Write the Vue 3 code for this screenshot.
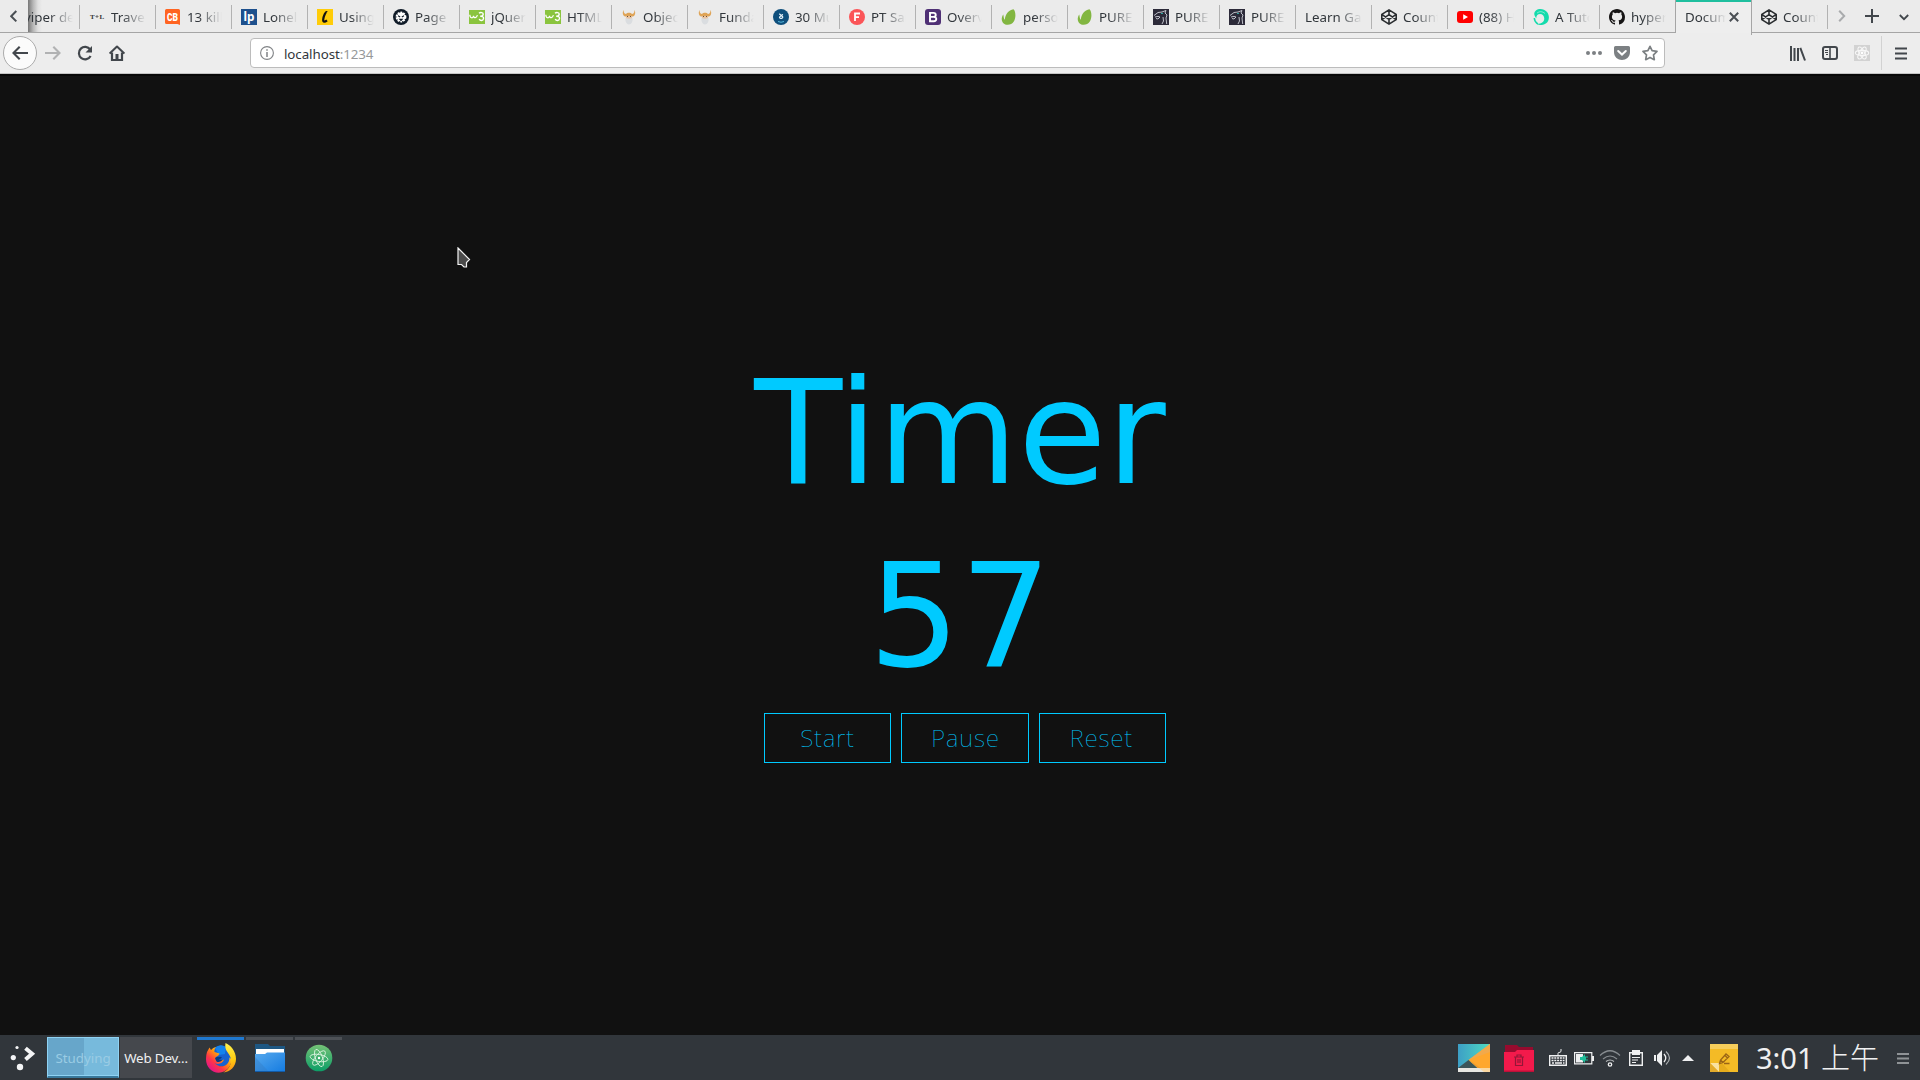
<script setup>
const tabs = [
  { icon: 'tl', title: 'Trave' },
  { icon: 'cb', title: '13 kill' },
  { icon: 'lp', title: 'Lonel' },
  { icon: 'l', title: 'Using' },
  { icon: 'lion', title: 'Page ' },
  { icon: 'w3', title: 'jQuer' },
  { icon: 'w3', title: 'HTML' },
  { icon: 'viking', title: 'Objec' },
  { icon: 'viking', title: 'Funda' },
  { icon: 'thirty', title: '30 Mu' },
  { icon: 'f', title: 'PT San' },
  { icon: 'b', title: 'Overv' },
  { icon: 'leaf', title: 'perso' },
  { icon: 'leaf', title: 'PURE' },
  { icon: 'panther', title: 'PURE' },
  { icon: 'panther', title: 'PURE' },
  { icon: '', title: 'Learn Ga' },
  { icon: 'codepen', title: 'Count' },
  { icon: 'yt', title: '(88) H' },
  { icon: 'tut', title: 'A Tuto' },
  { icon: 'github', title: 'hyper' },
  { icon: '', title: 'Docum', active: true },
  { icon: 'codepen', title: 'Count' },
]
</script>

<template>
  <div class="screen">
    <header class="tabbar">
      <div class="scroll-left">
        <svg width="8" height="14" viewBox="0 0 8 14"><path d="M6.300 1 1.200 6.200l5.100 5.200" fill="none" stroke="#4a4f54" stroke-width="2" /></svg>
      </div>
      <div class="tab partial"><span class="title">viper de</span></div>
      <div v-for="(t, i) in tabs" :key="i" class="tab" :class="{ active: t.active, before: i === 20 }">
        <svg v-if="t.icon" class="fav" width="16" height="16" viewBox="0 0 16 16">
          <g v-if="t.icon === 'tl'" font-family="Liberation Serif, serif" font-weight="700" font-size="7" fill="#333">
            <text x="1" y="10">T</text><text x="10.500" y="10">L</text><path d="M6.500 7.500h3M8 6v3" stroke="#777" stroke-width="1" />
          </g>
          <g v-else-if="t.icon === 'cb'">
            <path d="M1.500 0h12A1.500 1.500 0 0 1 15 1.500V16L12.500 15H1.500A1.500 1.500 0 0 1 0 13.500v-12A1.500 1.500 0 0 1 1.500 0" fill="#ff6421" />
            <text x="2" y="12" font-family="Roboto, sans-serif" font-weight="900" font-size="11.500" textLength="11" lengthAdjust="spacingAndGlyphs" fill="#fff">CB</text>
          </g>
          <g v-else-if="t.icon === 'lp'">
            <path d="M0 0h16v16H0z" fill="#1d508d" />
            <text x="2.500" y="11.500" font-family="Noto Sans, sans-serif" font-weight="700" font-size="12.500" textLength="11" lengthAdjust="spacingAndGlyphs" fill="#fff">lp</text>
          </g>
          <g v-else-if="t.icon === 'l'">
            <path d="M0 0h16v16H0z" fill="#ffcc08" />
            <path d="M10 3.200C8.700 2 6.500 7.500 6.200 10.500c-.2 3 1.800 2.500 3.800.8" fill="none" stroke="#111" stroke-width="2.200" />
          </g>
          <g v-else-if="t.icon === 'lion'">
            <circle cx="8" cy="8" r="8" fill="#101b28" />
            <circle cx="8" cy="8" r="4.400" fill="#fff" stroke="#fff" stroke-width="2" stroke-dasharray="1.800 1" />
            <path d="M5 6.800 7.200 8M11 6.800 8.800 8M6.800 10.200h2.400L8 11.500z" stroke="#101b28" stroke-width="1.100" />
          </g>
          <g v-else-if="t.icon === 'w3'">
            <path d="M0 1h16v14H0z" fill="#8ac43e" />
            <path d="M.8 5.800C1 9.600 4.200 9.600 4.500 6.800 4.900 9.600 7.600 9 8.400 6.200" fill="none" stroke="#fff" stroke-width="1.200" />
            <path d="M10 4.300c1.500-1.400 4.300-.8 4.200.9-.1 1.400-1.500 2-3 2 2.200-.1 3.600.8 3.300 2.500-.4 2.300-3.300 2.500-4.300.3" fill="none" stroke="#fff" stroke-width="1.400" />
          </g>
          <g v-else-if="t.icon === 'viking'">
            <path d="M2.500 1C2.500 4 4 5 5 5c1-1.600 5-1.600 6 0 1 0 2.500-1 2.500-4 1.500 3 .5 6-1.700 6.500H4.200C2 7 1 4 2.500 1" fill="#dfa457" />
            <path d="M5 7h6v4L8 13l-3-2z" fill="#e8c3a2" /><path d="M4.500 9 8 9.800 11.500 9c.5 3.500-1 6.500-3.500 6.500S4 12.500 4.500 9" fill="#dadde0" />
            <path d="M6 7.500h1M9 7.500h1" stroke="#69543f" />
          </g>
          <g v-else-if="t.icon === 'thirty'">
            <circle cx="8" cy="8" r="8" fill="#0f4f7c" />
            <path d="M6.300 4.800 9.700 7.800C10 9.800 7 10 6.500 8.300 6.400 7.300 9.300 7 9.600 5.200" fill="none" stroke="#e8f4fa" stroke-width="1.200" />
            <path d="M5 12.500q3 1.500 6 0" fill="none" stroke="#54b7dd" />
          </g>
          <g v-else-if="t.icon === 'f'">
            <circle cx="8" cy="8" r="8" fill="#fb5558" />
            <path d="M6 12V4.500h5M6 8.200h4" fill="none" stroke="#fff" stroke-width="1.800" />
          </g>
          <g v-else-if="t.icon === 'b'">
            <rect width="16" height="16" rx="3" fill="#4f3075" />
            <path d="M5 3.900h3.500c3 0 3 4 0 4H5h3.800c3.400 0 3.200 4.300 0 4.300H5z" fill="none" stroke="#fff" stroke-width="1.900" />
          </g>
          <g v-else-if="t.icon === 'leaf'">
            <path d="M12.500.3c2.400 2 2.600 9 .3 12.200-2.300 3.700-7.800 4.400-10.700 1.400C.2 12 .3 8 2.300 5.500c.5 2.500.4 4.500 1.500 5.200C4.200 5.500 7.500 1 12.500.3" fill="#82b641" />
          </g>
          <g v-else-if="t.icon === 'panther'">
            <path d="M0 0h16v16H0z" fill="#2c2a39" />
            <path d="M1 6.500 5 3.500 9 3l4-1.500L12 4l2 2-1 3 .7 6M2 8l3-.6 2 .6-2 2-2-.5M10 8l.5 4L9 15" fill="none" stroke="#ced0d8" stroke-width=".9" />
            <path d="M8 4.500h2" stroke="#2fa6a0" />
          </g>
          <g v-else-if="t.icon === 'codepen'" fill="none" stroke="#2a2d30" stroke-width="1.600" stroke-linejoin="round">
            <path d="M8 .9 15.200 5.400v5.200L8 15.100.8 10.600V5.400zM8 .9v4.700M8 10.400v4.700M.8 5.400 8 10.400l7.200-5M.8 10.600 8 5.600l7.200 5" />
          </g>
          <g v-else-if="t.icon === 'yt'">
            <rect y="2" width="16" height="12" rx="3" fill="#f00" /><path d="M6.200 5.200v5.600L11 8z" fill="#fff" />
          </g>
          <g v-else-if="t.icon === 'tut'">
            <path d="M3 1.500C6-.8 11-.3 14 3c3 4 2.300 9-1.200 11.500-3 2.200-7.500 2-9.500-.2 3 1 6.700-.2 7.700-3 1-3.300-1-6.300-4-6.300-2.500 0-4 2-3.600 4.200C1 7 .3 3.500 3 1.500" fill="#14dbac" />
            <path d="M1.300 9Q1.500 13 4.800 15" fill="none" stroke="#14dbac" stroke-width="1.500" />
            <path d="M4 4q4-3 8 .5" fill="none" stroke="#a5f3df" stroke-width=".7" />
          </g>
          <path v-else-if="t.icon === 'github'" fill="#171515" d="M8 0C3.580 0 0 3.580 0 8c0 3.540 2.290 6.530 5.470 7.590.4.070.55-.17.55-.38 0-.19-.01-.82-.01-1.490-2.010.37-2.530-.49-2.690-.94-.09-.23-.48-.94-.82-1.130-.28-.15-.68-.52-.01-.53.630-.01 1.080.58 1.230.82.72 1.210 1.870.87 2.330.66.070-.52.280-.87.510-1.070-1.780-.2-3.640-.89-3.640-3.950 0-.87.310-1.590.82-2.150-.08-.2-.36-1.020.08-2.120 0 0 .67-.21 2.200.82a7.400 7.400 0 0 1 4 0c1.530-1.040 2.200-.82 2.200-.82.44 1.100.16 1.920.08 2.120.510.560.82 1.270.82 2.150 0 3.070-1.870 3.750-3.650 3.950.29.25.54.73.54 1.480 0 1.070-.01 1.930-.01 2.200 0 .21.150.460.550.38A8 8 0 0 0 16 8c0-4.420-3.580-8-8-8" />
        </svg>
        <span class="title">{{ t.title }}</span>
        <svg v-if="t.active" class="close" width="10" height="10" viewBox="0 0 10 10"><path d="m.8.8 8.400 8.400M9.200.8.8 9.200" stroke="#4a4f54" stroke-width="2" /></svg>
      </div>
      <div class="tab-tools">
        <svg width="8" height="12" viewBox="0 0 8 12"><path d="m1.200.8 5 5.200-5 5.200" fill="none" stroke="#a9abad" stroke-width="2" /></svg>
        <svg class="plus" width="14" height="14" viewBox="0 0 14 14"><path d="M7 0v14M0 7h14" stroke="#42474c" stroke-width="2" /></svg>
        <svg class="down" width="10" height="7" viewBox="0 0 10 7"><path d="m.8 1 4.200 4.200L9.200 1" fill="none" stroke="#42474c" stroke-width="1.800" /></svg>
      </div>
    </header>

    <nav class="toolbar">
      <div class="back">
        <svg width="16" height="14" viewBox="0 0 16 14"><path d="M16 7H2M7.700.8 1.500 7l6.200 6.200" fill="none" stroke="#42474c" stroke-width="2.100" /></svg>
      </div>
      <svg class="fwd" width="16" height="14" viewBox="0 0 16 14"><path d="M0 7h14M8.300.8 14.500 7l-6.200 6.200" fill="none" stroke="#b1b2b3" stroke-width="2.100" /></svg>
      <svg class="reload" width="16" height="16" viewBox="0 0 16 16"><path d="M13.200 4.500A6.200 6.200 0 1 0 13.600 11" fill="none" stroke="#42474c" stroke-width="2.200" /><path d="M15 1v6.500H8.500z" fill="#42474c" /></svg>
      <svg class="home" width="16" height="16" viewBox="0 0 16 16"><path d="m.6 8.600 7.400-7 7.400 7" fill="none" stroke="#42474c" stroke-width="2.100" stroke-linejoin="round" /><path d="M3 7.500V15h10V7.500" fill="none" stroke="#42474c" stroke-width="2.200" /><path d="M6.500 9h3v6h-3z" fill="#42474c" /></svg>
      <div class="url">
        <svg width="14" height="14" viewBox="0 0 14 14"><circle cx="7" cy="7" r="6.400" fill="none" stroke="#808386" stroke-width="1.100" /><path d="M7 6v5M7 3.200v1.500" stroke="#808386" stroke-width="1.500" /></svg>
        <span class="address">localhost<span class="port">:1234</span></span>
        <svg class="dots" width="16" height="4" viewBox="0 0 16 4" fill="#7c8083"><circle cx="2" cy="2" r="2" /><circle cx="8" cy="2" r="2" /><circle cx="14" cy="2" r="2" /></svg>
        <svg class="pocket" width="16" height="14" viewBox="0 0 16 14"><path d="M1.500 0h13A1.500 1.500 0 0 1 16 1.500V6c0 10.600-16 10.600-16 0V1.500A1.500 1.500 0 0 1 1.500 0" fill="#7c8083" /><path d="M4.200 5 8 8.600 11.800 5" fill="none" stroke="#fff" stroke-width="2" stroke-linecap="round" /></svg>
        <svg class="star" width="16" height="16" viewBox="0 0 16 16"><path d="m8 1.300 2.100 4.400 4.900.7-3.500 3.400.8 4.900L8 12.400l-4.300 2.300.8-4.900L1 6.400l4.900-.7z" fill="none" stroke="#7c8083" stroke-width="1.700" stroke-linejoin="round" /></svg>
      </div>
      <div class="tools">
        <svg width="16" height="15" viewBox="0 0 16 15"><path d="M1 0v15M4.500 2v13M8 2v13M10.300 1.800 15 14.500" stroke="#42474c" stroke-width="2" fill="none" /></svg>
        <svg class="sidebar" width="16" height="14" viewBox="0 0 16 14"><rect x="1" y="1" width="14" height="12" rx="2" fill="none" stroke="#42474c" stroke-width="2" /><path d="M8 1v12" stroke="#42474c" stroke-width="1.600" /><path d="M3 4.500h3M3 6.500h3M4 8.500h2" stroke="#42474c" /></svg>
        <svg class="react" width="16" height="16" viewBox="0 0 16 16"><path d="M0 0h16v16H0z" fill="#d2d2d2" /><g fill="none" stroke="#f7f7f7" stroke-width="1.100"><ellipse cx="8" cy="8" rx="6.700" ry="2.600" /><ellipse cx="8" cy="8" rx="6.700" ry="2.600" transform="rotate(60 8 8)" /><ellipse cx="8" cy="8" rx="6.700" ry="2.600" transform="rotate(120 8 8)" /></g><circle cx="8" cy="8" r="1.400" fill="#fff" /></svg>
        <i class="divider"></i>
        <svg class="menu" width="12" height="13" viewBox="0 0 12 13"><path d="M0 1.500h12M0 6.500h12M0 11.500h12" stroke="#42474c" stroke-width="2" /></svg>
      </div>
    </nav>

    <main class="page">
      <h1 class="heading">Timer</h1>
      <div class="count">57</div>
      <div class="buttons">
        <button>Start</button><button class="mid">Pause</button><button class="last">Reset</button>
      </div>
      <svg class="cursor" width="14" height="22" viewBox="0 0 14 22"><path d="M1 1 12.500 12.500 9.500 15.500V20L7 20 4.500 17.500H1z" fill="#4b4b4b" stroke="#f4f4f4" stroke-width="1.200" /></svg>
    </main>

    <footer class="panel">
      <svg class="launcher" width="26" height="26" viewBox="0 0 26 26" fill="#f4f5f6"><circle cx="7" cy="2.500" r="1.600" /><circle cx="3.300" cy="12.600" r="2.600" /><circle cx="10" cy="22" r="3.200" /><path d="m15.500 3.200 6.600 5.500-6.600 5.800" fill="none" stroke="#f4f5f6" stroke-width="4" /></svg>
      <div class="pager current"><span>Studying</span></div>
      <div class="pager other"><span>Web Dev...</span></div>
      <div class="task running">
        <svg width="32" height="32" viewBox="0 0 32 32">
          <defs>
            <linearGradient id="fox" x1=".9" y1=".1" x2=".2" y2=".9"><stop offset="0" stop-color="#fff44f" /><stop offset=".4" stop-color="#ff980e" /><stop offset=".7" stop-color="#ff3647" /><stop offset="1" stop-color="#e31587" /></linearGradient>
            <linearGradient id="yellow" x1=".4" y1="0" x2=".5" y2="1"><stop offset="0" stop-color="#fff44f" /><stop offset=".6" stop-color="#ffcb10" /><stop offset="1" stop-color="#ff8a16" /></linearGradient>
          </defs>
          <circle cx="16" cy="14" r="10.500" fill="#1762d0" /><path d="M10 6q5-5 11-1l-1 7-6 1z" fill="#1483ed" />
          <path d="M2 10 4.500 5.500 6 8q2-2.500 5-3-2 2-1.500 5l5 1.500q-.5 2-3.500 3.500c-1.500 3 1 5 4 4l4-1.500c-1 4-6 5.500-9.500 3.500 6 6.500 15 3 15-5.500 4 2 1 12-7 14.500C10 33 1 27 1 17q0-4 1-7" fill="url(#fox)" />
          <path d="M20.500 1c5 2 10.500 8 10.500 16 0 7.500-6 13-12.500 13.500 6-3.500 8.500-9 7-15C24.500 11 19 9 20.500 1" fill="url(#yellow)" />
          <path d="M10 16q2-2 7-1-1 2-3.500 2.500l4 .5q-3 3-6 1.500" fill="#073b83" />
        </svg>
      </div>
      <div class="task">
        <svg width="30" height="28" viewBox="0 0 30 28">
          <defs><linearGradient id="blue" x1="0" y1="0" x2="1" y2="1"><stop offset="0" stop-color="#57a9ed" /><stop offset="1" stop-color="#147be1" /></linearGradient></defs>
          <path d="M0 0h13l2 2h15v15H0z" fill="#1d5783" /><path d="M1 5h28v7H1z" fill="#fff" /><path d="M0 10h10l2-1.500h18V28H0z" fill="url(#blue)" /><path d="M0 27h30v1H0z" fill="#125ba8" /><path d="M0 13 13 27H0z" fill="#3478bd" opacity=".35" />
        </svg>
      </div>
      <div class="task">
        <svg width="28" height="28" viewBox="0 0 28 28">
          <defs><linearGradient id="green" x1="0" y1="0" x2="0" y2="1"><stop offset="0" stop-color="#75c276" /><stop offset="1" stop-color="#0c9e67" /></linearGradient></defs>
          <circle cx="14" cy="14" r="13.300" fill="url(#green)" />
          <g fill="none" stroke="#d9f1dd" stroke-width=".9"><ellipse cx="14" cy="14" rx="9" ry="3.500" transform="rotate(10 14 14)" /><ellipse cx="14" cy="14" rx="9" ry="3.500" transform="rotate(70 14 14)" /><ellipse cx="14" cy="14" rx="9" ry="3.500" transform="rotate(130 14 14)" /></g><circle cx="14" cy="14" r="1.200" fill="#fff" />
        </svg>
      </div>

      <div class="tray">
        <svg class="wall" width="32" height="28" viewBox="0 0 32 28">
          <defs><linearGradient id="sea"><stop offset="0" stop-color="#3d9fc6" /><stop offset="1" stop-color="#4edbc1" /></linearGradient></defs>
          <path d="M0 0h32v28H0z" fill="url(#sea)" /><path d="M32 0v28H24L10.500 16z" fill="#ffa72d" /><path d="m32 0-21.500 16L32 8z" fill="#f2a94b" /><path d="m10.500 16 9 8H0z" fill="#3c5559" /><path d="m10.500 16 9 8 5 1z" fill="#ed9a2c" /><path d="M0 24h32v4H0z" fill="#e7e6e1" /><path d="m21 24h11v4h-6z" fill="#fad7a0" />
        </svg>
        <svg class="trash" width="30" height="27" viewBox="0 0 30 27"><path d="M1 0h12l2 2h14v10H1z" fill="#970b2e" /><path d="M0 7h11l2-2h17v22H0z" fill="#f31a4b" /><path d="M0 25.500h30V27H0z" fill="#be1039" /><path d="M10 12h10M13 12v-2h4v2M11.500 12v8.500h7V12M14 14v4M16 14v4" fill="none" stroke="#941638" stroke-width="1.200" /></svg>
        <svg class="kbd" width="18" height="17" viewBox="0 0 18 17"><path d="M.7 6.700h16.600v9.600H.7z" fill="none" stroke="#eff0f1" stroke-width="1.400" /><path d="M9 6.500V4.500q0-1 1-1t2-1V0" fill="none" stroke="#eff0f1" /><path d="M2.500 9h13M2.500 11.500h13" stroke="#eff0f1" stroke-width="1.600" stroke-dasharray="2 .8" /><path d="M3 14h2m1 0h7m1 0h1.500" stroke="#eff0f1" stroke-width="1.300" /></svg>
        <svg class="bat" width="20" height="13" viewBox="0 0 20 13"><path d="M.6.600h17.200v11.300H.6z" fill="none" stroke="#eff0f1" stroke-width="1.200" /><path d="M18 4h2v5h-2z" fill="#eff0f1" /><path d="M2 2h7v8.500H2z" fill="#eff0f1" /><path d="M6 5h2l3-3v2.500h3v1h-2v2h2v1h-3V11L8 8H6z" fill="#1fbd99" /></svg>
        <svg class="wifi" width="22" height="17" viewBox="0 0 22 17"><g fill="none" stroke="#888d91" stroke-width="1.200"><path d="M1 5.500q10-9.500 20 0M4 9q7-6 14 0" /><path d="M7 11.500q4-3 8 0" stroke="#b9bcbe" /></g><circle cx="11" cy="14.500" r="1.700" fill="none" stroke="#eff0f1" stroke-width="1.300" /></svg>
        <svg class="clip" width="14" height="16" viewBox="0 0 14 16"><path d="M.7 2.700h12.600v12.600H.7z" fill="none" stroke="#eff0f1" stroke-width="1.400" /><path d="M3 0h8v5H3z" fill="#eff0f1" /><path d="M3 7.500h8M3 10h6M3 12.500h4" stroke="#eff0f1" stroke-width="1.200" /></svg>
        <svg class="vol" width="17" height="16" viewBox="0 0 17 16"><path d="M0 5h2v6H0zM3 5l5-5v16l-5-5z" fill="#eff0f1" /><path d="M10 4q3.500 4 0 8" fill="none" stroke="#eff0f1" stroke-width="1.300" /><path d="M12 1.500q7 6.500 0 13" fill="none" stroke="#a9adb0" stroke-width="1.200" /></svg>
        <svg class="tri" width="12" height="6" viewBox="0 0 12 6"><path d="M6 0l6 6H0z" fill="#eff0f1" /></svg>
        <svg class="note" width="28" height="28" viewBox="0 0 28 28"><path d="M0 0h28v28H0z" fill="#f4bb26" /><path d="M0 0h28v5H0z" fill="#f7ce5b" /><path d="M0 19h9v9z" fill="#f9e1a2" /><path d="M0 19l9 9H0z" fill="#e3ab2c" /><path d="M9 19h3l8 9H9z" fill="#e6ac1c" /><path d="M9.500 19.500 10.500 16 16 10l3 2.500-6 6zM14.500 11l3 3M10.500 16l2.500 2.500M14 19.500h5.500" fill="none" stroke="#9b6515" stroke-width="1.300" /></svg>
        <time class="clock">3:01 <span class="half">上午</span></time>
        <svg class="burger" width="12" height="11" viewBox="0 0 12 11"><path d="M0 1h12M0 5.500h12M0 10h12" stroke="#8f9396" stroke-width="1.800" /></svg>
      </div>
    </footer>
  </div>
</template>

<style>
body { margin: 0; background: #111; overflow: hidden; }
</style>

<style scoped>
.screen { width: 1920px; height: 1080px; display: flex; flex-direction: column; overflow: hidden; background: #111; font: 13.333px/18px "Noto Sans", "Noto Sans CJK TC", sans-serif; color: #31363b; }
.screen * { box-sizing: border-box; }
svg { display: block; flex: none; }
.tabbar { height: 33px; flex: none; display: flex; background: #ebebeb; box-shadow: inset 0 -1px #a5a5a5; }
.scroll-left { width: 28px; flex: none; padding: 10px 0 0 10px; }
.tab { position: relative; width: 76px; height: 33px; flex: none; display: flex; align-items: flex-start; padding: 0 10px 0 9px; }
.tab::after { content: ""; position: absolute; right: 0; top: 5px; width: 1px; height: 24px; background: #b2b2b2; }
.tab.partial { width: 52px; padding: 0 7px 0 0; background: linear-gradient(90deg, #777 0, #b5b5b5 5px, #e0e0e0 10px, transparent 14px) 0 0 / 100% 32px no-repeat; }
.partial .title { text-indent: -4px; }
.fav { margin: 9px 6px 0 0; }
.title { flex: 1; min-width: 0; height: 22px; margin-top: 8px; overflow: hidden; white-space: pre; mask-image: linear-gradient(to left, transparent, #000 24px); }
.tab.before::after { top: 0; height: 33px; background: #a5a5a5; }
.tab.active { padding-right: 13px; background: #eee; border-top: 2px solid #1fbf9f; }
.tab.active::after { top: -2px; height: 35px; background: #a5a5a5; }
.active .title { margin-top: 6px; }
.close { margin: 10px 0 0 3px; }
.tab-tools { display: flex; align-items: flex-start; padding: 10px 0 0 10px; }
.plus { margin: -1px 0 0 19px; }
.down { margin: 4px 0 0 20px; }
.toolbar { height: 41px; flex: none; display: flex; align-items: center; background: #ededed; border-bottom: 1px solid #c3c3c3; }
.back { width: 34px; height: 34px; margin-left: 3px; flex: none; border: 1px solid #ababab; border-radius: 50%; background: #fbfbfb; display: flex; align-items: center; justify-content: center; }
.fwd { margin-left: 8px; }
.reload { margin-left: 16px; }
.home { margin-left: 16px; }
.url { width: 1415px; height: 30px; margin-left: 125px; flex: none; display: flex; align-items: center; padding: 0 6px 0 9px; border: 1px solid #bcbcbc; border-radius: 4px; background: #fff; }
.address { flex: 1; margin: 2px 0 0 10px; letter-spacing: -.07px; }
.port { color: #969899; }
.pocket { margin-left: 12px; }
.star { margin-left: 12px; }
.tools { display: flex; align-items: center; margin-left: 125px; }
.sidebar { margin-left: 16px; }
.react { margin-left: 16px; }
.divider { width: 1px; height: 34px; margin-left: 11px; background: #d2d2d2; }
.menu { margin-left: 13px; }
.page { position: relative; flex: 1; display: flex; flex-direction: column; align-items: center; background: #111; border-top: 2px solid #070707; color: #00caff; }
.heading { margin: 273px 0 0; font: 144px/168px "DejaVu Sans", sans-serif; }
.count { margin-top: 15px; font: 144px/168px "DejaVu Sans", sans-serif; }
.buttons { display: flex; gap: 10px; margin: 13px 0 0 10px; }
button { width: 127px; height: 50px; padding: 0; border: 1px solid #00caff; background: transparent; color: #00caff; font: 100 24px/46px "Noto Sans", sans-serif; letter-spacing: 1px; }
button.mid { width: 128px; padding-left: 1px; }
button.last { padding-right: 2px; }
.cursor { position: absolute; left: 457px; top: 171px; }
.panel { height: 45px; flex: none; display: flex; align-items: flex-start; background: #31363b; color: #eff0f1; }
.launcher { margin: 10px 0 0 10px; }
.pager { width: 72px; height: 41px; margin: 2px 0 0 11px; display: flex; align-items: center; justify-content: center; font-size: 13.333px; }
.pager.current { border: 1px solid #8fd3f4; border-bottom: 2px solid #39799c; background: linear-gradient(90deg, #67a6ca 36px, #77badc 36px); color: #9acce4; box-shadow: inset 0 -1px #8fd3f4; }
.pager.other { margin-left: 1px; background: #45484d; }
.pager span { padding-top: 1px; white-space: nowrap; }
.pager.other span { letter-spacing: -.15px; }
.task { width: 47px; height: 41px; margin: 2px 0 0 2px; padding-bottom: 2px; border-top: 3px solid #4d5156; display: flex; align-items: center; justify-content: center; }
.task.running { margin-left: 5px; border-color: #1f78cf; }
.tray { flex: 1; display: flex; align-items: flex-start; justify-content: flex-end; padding-right: 11px; }
.wall { margin-top: 9px; }
.trash { margin: 10px 0 0 14px; }
.kbd { margin: 14px 0 0 15px; }
.bat { margin: 17px 0 0 7px; }
.wifi { margin: 15px 0 0 5px; }
.clip { margin: 15px 0 0 8px; }
.vol { margin: 15px 0 0 11px; }
.tri { margin: 20px 0 0 11px; }
.note { margin: 9px 0 0 16px; }
.clock { width: 141px; margin: 2px 0 0 18px; font: 400 29px/42px "Noto Sans", "Noto Sans CJK TC", sans-serif; white-space: nowrap; }
.half { font-weight: 300; }
.burger { margin: 18px 0 0; }
</style>
